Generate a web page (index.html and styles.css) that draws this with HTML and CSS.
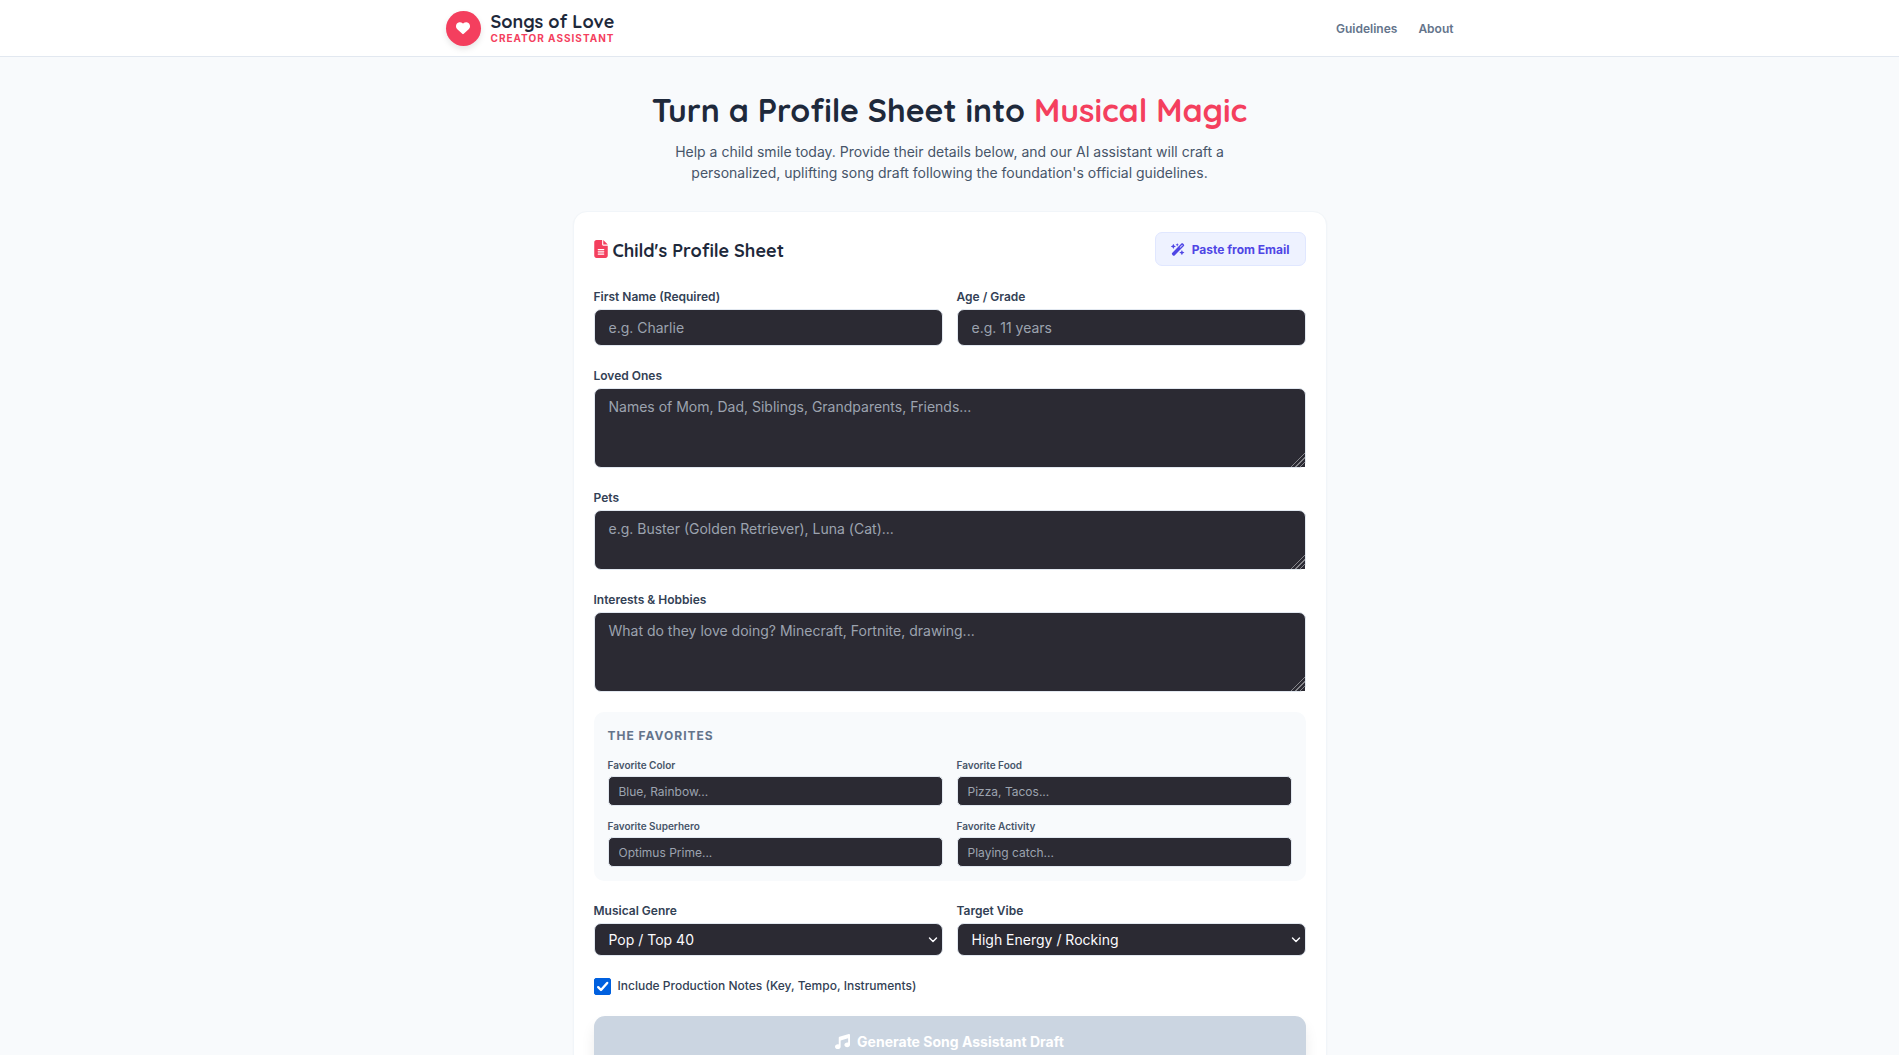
FILE: index.html
```html
<!DOCTYPE html>
<html lang="en">
<head>
  <meta charset="UTF-8">
  <meta name="viewport" content="width=device-width, initial-scale=1.0">
  <title>Songs of Love - Creator Assistant</title>
  <link rel="stylesheet" href="styles.css">
</head>
<body>
  <header class="site-header">
    <div class="header-inner">
      <div class="brand">
        <div class="brand-logo">
          <svg width="14" height="14" viewBox="0 0 512 512" fill="currentColor" aria-hidden="true"><path d="M47.6 300.4L228.3 469.1c7.5 7 17.4 10.9 27.7 10.9s20.2-3.9 27.7-10.9L464.4 300.4c30.4-28.3 47.6-68 47.6-109.5v-5.8c0-69.9-50.5-129.5-119.4-141C347 36.5 300.6 51.4 268 84L256 96 244 84c-32.6-32.6-79-47.5-124.6-39.9C50.5 55.6 0 115.2 0 185.1v5.8c0 41.5 17.2 81.2 47.6 109.5z"/></svg>
        </div>
        <div>
          <div class="brand-name">Songs of Love</div>
          <div class="brand-sub">Creator Assistant</div>
        </div>
      </div>
      <nav class="site-nav">
        <a href="#guidelines">Guidelines</a>
        <a href="#about">About</a>
      </nav>
    </div>
  </header>

  <main class="page">
    <section class="intro">
      <h1>Turn a Profile Sheet into <span class="highlight">Musical Magic</span></h1>
      <p>Help a child smile today. Provide their details below, and our AI assistant will craft a personalized, uplifting song draft following the foundation's official guidelines.</p>
    </section>

    <form class="card" id="profile-form">
      <div class="card-header">
        <h2>
          <svg class="file-icon" width="14" height="18" viewBox="0 0 384 512" fill="currentColor" aria-hidden="true"><path d="M64 0C28.7 0 0 28.7 0 64V448c0 35.3 28.7 64 64 64H320c35.3 0 64-28.7 64-64V160H256c-17.7 0-32-14.3-32-32V0H64zM256 0V128H384L256 0zM112 256H272c8.8 0 16 7.2 16 16s-7.2 16-16 16H112c-8.8 0-16-7.2-16-16s7.2-16 16-16zm0 64H272c8.8 0 16 7.2 16 16s-7.2 16-16 16H112c-8.8 0-16-7.2-16-16s7.2-16 16-16zm0 64H272c8.8 0 16 7.2 16 16s-7.2 16-16 16H112c-8.8 0-16-7.2-16-16s7.2-16 16-16z"/></svg>
          Child's Profile Sheet
        </h2>
        <button type="button" class="paste-btn">
          <svg width="14" height="13" viewBox="0 0 576 512" fill="currentColor" aria-hidden="true"><path d="M234.7 42.7L197 56.8c-3 1.1-5 4-5 7.2s2 6.1 5 7.2l37.7 14.1L248.8 123c1.1 3 4 5 7.2 5s6.1-2 7.2-5l14.1-37.7L315 71.2c3-1.1 5-4 5-7.2s-2-6.1-5-7.2L277.3 42.7 263.2 5c-1.1-3-4-5-7.2-5s-6.1 2-7.2 5L234.7 42.7zM46.1 395.4c-18.7 18.7-18.7 49.1 0 67.9l34.6 34.6c18.7 18.7 49.1 18.7 67.9 0L529.9 116.5c18.7-18.7 18.7-49.1 0-67.9L495.3 14.1c-18.7-18.7-49.1-18.7-67.9 0L46.1 395.4zM484.6 82.6l-105 105-23.3-23.3 105-105 23.3 23.3zM7.5 117.2C3 118.9 0 123.2 0 128s3 9.1 7.5 10.8L64 160l21.2 56.5c1.7 4.5 6 7.5 10.8 7.5s9.1-3 10.8-7.5L128 160l56.5-21.2c4.5-1.7 7.5-6 7.5-10.8s-3-9.1-7.5-10.8L128 96 106.8 39.5C105.1 35 100.8 32 96 32s-9.1 3-10.8 7.5L64 96 7.5 117.2zm352 256c-4.5 1.7-7.5 6-7.5 10.8s3 9.1 7.5 10.8L416 416l21.2 56.5c1.7 4.5 6 7.5 10.8 7.5s9.1-3 10.8-7.5L480 416l56.5-21.2c4.5-1.7 7.5-6 7.5-10.8s-3-9.1-7.5-10.8L480 352l-21.2-56.5c-1.7-4.5-6-7.5-10.8-7.5s-9.1 3-10.8 7.5L416 352l-56.5 21.2z"/></svg>
          Paste from Email
        </button>
      </div>

      <div class="fields">
        <div class="row">
          <div class="field">
            <label for="first-name">First Name (Required)</label>
            <input type="text" id="first-name" placeholder="e.g. Charlie">
          </div>
          <div class="field">
            <label for="age">Age / Grade</label>
            <input type="text" id="age" placeholder="e.g. 11 years">
          </div>
        </div>

        <div class="field">
          <label for="loved-ones">Loved Ones</label>
          <textarea id="loved-ones" class="tall" placeholder="Names of Mom, Dad, Siblings, Grandparents, Friends..."></textarea>
        </div>

        <div class="field">
          <label for="pets">Pets</label>
          <textarea id="pets" placeholder="e.g. Buster (Golden Retriever), Luna (Cat)..."></textarea>
        </div>

        <div class="field">
          <label for="interests">Interests &amp; Hobbies</label>
          <textarea id="interests" class="tall" placeholder="What do they love doing? Minecraft, Fortnite, drawing..."></textarea>
        </div>

        <div class="favorites">
          <h3>The Favorites</h3>
          <div class="row">
            <div class="field small">
              <label for="fav-color">Favorite Color</label>
              <input type="text" id="fav-color" placeholder="Blue, Rainbow...">
            </div>
            <div class="field small">
              <label for="fav-food">Favorite Food</label>
              <input type="text" id="fav-food" placeholder="Pizza, Tacos...">
            </div>
            <div class="field small">
              <label for="fav-hero">Favorite Superhero</label>
              <input type="text" id="fav-hero" placeholder="Optimus Prime...">
            </div>
            <div class="field small">
              <label for="fav-activity">Favorite Activity</label>
              <input type="text" id="fav-activity" placeholder="Playing catch...">
            </div>
          </div>
        </div>

        <div class="row">
          <div class="field">
            <label for="genre">Musical Genre</label>
            <div class="select-wrap">
              <select id="genre">
                <option>Pop / Top 40</option>
                <option>Rock</option>
                <option>Country</option>
              </select>
              <svg class="chevron" width="10" height="6" viewBox="0 0 10 6" fill="none" stroke="currentColor" stroke-width="1.4" stroke-linecap="round" stroke-linejoin="round" aria-hidden="true"><path d="M1.5 1L5 4.6 8.5 1"/></svg>
            </div>
          </div>
          <div class="field">
            <label for="vibe">Target Vibe</label>
            <div class="select-wrap">
              <select id="vibe">
                <option>High Energy / Rocking</option>
                <option>Calm / Soothing</option>
              </select>
              <svg class="chevron" width="10" height="6" viewBox="0 0 10 6" fill="none" stroke="currentColor" stroke-width="1.4" stroke-linecap="round" stroke-linejoin="round" aria-hidden="true"><path d="M1.5 1L5 4.6 8.5 1"/></svg>
            </div>
          </div>
        </div>

        <div class="check-row">
          <span class="check-box">
            <input type="checkbox" id="notes" checked>
            <svg class="tick" width="17" height="17" viewBox="0 0 17 17" fill="none" stroke="#fff" stroke-width="2.4" stroke-linecap="round" stroke-linejoin="round" aria-hidden="true"><path d="M4.2 9.2L7 12 13.2 5"/></svg>
          </span>
          <label for="notes">Include Production Notes (Key, Tempo, Instruments)</label>
        </div>

        <button type="submit" class="generate-btn" disabled>
          <svg width="15" height="15" viewBox="0 0 512 512" fill="currentColor" aria-hidden="true"><path d="M499.1 6.3c8.1 6 12.9 15.6 12.9 25.7v72V368c0 44.2-43 80-96 80s-96-35.8-96-80s43-80 96-80c11.2 0 22 1.6 32 4.6V147L192 223.8V432c0 44.2-43 80-96 80s-96-35.8-96-80s43-80 96-80c11.2 0 22 1.6 32 4.6V200 128c0-14.1 9.3-26.6 22.8-30.7l320-96c9.7-2.9 20.2-1.1 28.3 5z"/></svg>
          Generate Song Assistant Draft
        </button>
      </div>
    </form>
  </main>
</body>
</html>
```

FILE: styles.css
```css
* {
  box-sizing: border-box;
}

body {
  margin: 0;
  font-family: Inter, sans-serif;
  font-size: 14px;
  line-height: 21px;
  color: #1e293b;
  background-color: #f8fafc;
}

h1,
h2,
h3,
p {
  margin: 0;
}

button,
input,
select,
textarea {
  font: inherit;
}

svg {
  flex: none;
}

/* header */
.site-header {
  background-color: #fff;
  border-bottom: 1px solid #e2e8f0;
}

.header-inner {
  display: flex;
  align-items: center;
  justify-content: space-between;
  max-width: 1036px;
  height: 56px;
  margin: 0 auto;
  padding: 0 14px;
}

.brand {
  display: flex;
  align-items: center;
  gap: 10px;
}

.brand-logo {
  display: flex;
  align-items: center;
  justify-content: center;
  width: 35px;
  height: 35px;
  border-radius: 50%;
  color: #fff;
  background-color: #f43f5e;
  box-shadow: 0 3px 6px rgba(0, 0, 0, 0.1);
}

.brand-name {
  font-family: Quicksand, Lato, sans-serif;
  font-size: 18px;
  font-weight: 700;
  line-height: 20px;
}

.brand-sub {
  font-size: 10px;
  font-weight: 700;
  line-height: 12px;
  letter-spacing: 1px;
  text-transform: uppercase;
  color: #f43f5e;
}

.site-nav {
  display: flex;
  gap: 21px;
}

.site-nav a {
  font-size: 12px;
  font-weight: 600;
  color: #64748b;
  text-decoration: none;
}

/* intro */
.page {
  max-width: 754px;
  margin: 0 auto;
  padding: 35px 0;
}

.intro {
  margin-bottom: 28px;
  text-align: center;
}

.intro h1 {
  margin-bottom: 13px;
  font-family: Quicksand, Lato, sans-serif;
  font-size: 32px;
  font-weight: 700;
  line-height: 36px;
}

.highlight {
  color: #f43f5e;
}

.intro p {
  max-width: 576px;
  margin: 0 auto;
  color: #475569;
}

/* form card */
.card {
  padding: 20px;
  background-color: #fff;
  border: 1px solid #f1f5f9;
  border-radius: 14px;
  box-shadow: 0 1px 2px rgba(0, 0, 0, 0.04);
}

.card-header {
  display: flex;
  align-items: center;
  justify-content: space-between;
  margin-bottom: 21px;
}

.card-header h2 {
  padding-top: 4px;
  font-family: Quicksand, Lato, sans-serif;
  font-size: 18px;
  font-weight: 700;
  line-height: 24px;
}

.file-icon {
  vertical-align: -1px;
  color: #f43f5e;
}

.paste-btn {
  display: flex;
  align-items: center;
  gap: 7px;
  height: 34px;
  padding: 0 15px;
  font-size: 12px;
  font-weight: 700;
  color: #4f46e5;
  background-color: #eef2ff;
  border: 1px solid #e0e7ff;
  border-radius: 7px;
}

.fields {
  display: flex;
  flex-direction: column;
  gap: 20px;
}

.row {
  display: grid;
  grid-template-columns: 1fr 1fr;
  gap: 12px 14px;
}

.field {
  display: flex;
  flex-direction: column;
  gap: 3px;
}

.field label {
  font-size: 12px;
  font-weight: 600;
  line-height: 19px;
  color: #334155;
}

.field input,
.field textarea,
.field select {
  width: 100%;
  padding: 7px 14px;
  color: #fbfbfe;
  background-color: #2b2a33;
  border: 1px solid #e2e8f0;
  border-radius: 7px;
}

.field textarea {
  display: block;
  height: 60px;
  resize: vertical;
}

.field textarea.tall {
  height: 80px;
}

.field textarea::-webkit-resizer {
  background: linear-gradient(135deg, #2b2a33 11px, #85858a 11px 12px, #2b2a33 12px 14px, #85858a 14px 15px, #2b2a33 15px 17px, #85858a 17px 18px, #2b2a33 18px);
}

.field ::placeholder {
  color: #9ca3af;
}

/* favorites */
.favorites {
  padding: 15px 14px 14px;
  background-color: #f8fafc;
  border-radius: 10px;
}

.favorites h3 {
  margin-bottom: 12px;
  font-size: 12px;
  font-weight: 700;
  line-height: 18px;
  letter-spacing: 1px;
  text-transform: uppercase;
  color: #64748b;
}

.small label {
  font-size: 10px;
  line-height: 16px;
  color: #475569;
}

.small input {
  height: 30px;
  padding: 0 10px;
  font-size: 12px;
  border-radius: 5px;
}

.select-wrap {
  position: relative;
}

.field select {
  display: block;
  height: 33px;
  padding: 0 14px;
  appearance: none;
}

.chevron {
  position: absolute;
  top: 14px;
  right: 5px;
  color: #fbfbfe;
  pointer-events: none;
}

.check-row {
  display: flex;
  align-items: center;
  gap: 7px;
  line-height: 20px;
}

.check-box {
  position: relative;
  width: 17px;
  height: 17px;
}

.check-box input {
  display: block;
  width: 17px;
  height: 17px;
  margin: 0;
  appearance: none;
  border: 1px solid #8f8f9d;
  border-radius: 2px;
}

.check-box input:checked {
  background-color: #0060df;
  border-color: #0060df;
}

.tick {
  position: absolute;
  top: 0;
  left: 0;
  pointer-events: none;
  visibility: hidden;
}

.check-box input:checked + .tick {
  visibility: visible;
}

.check-row label {
  font-size: 12px;
  font-weight: 500;
  color: #334155;
}

.generate-btn {
  display: flex;
  align-items: center;
  justify-content: center;
  gap: 7px;
  height: 50px;
  font-weight: 700;
  color: #fff;
  background-color: #cbd5e1;
  border: 0;
  border-radius: 11px;
  box-shadow: 0 9px 14px rgba(0, 0, 0, 0.08);
}
```
